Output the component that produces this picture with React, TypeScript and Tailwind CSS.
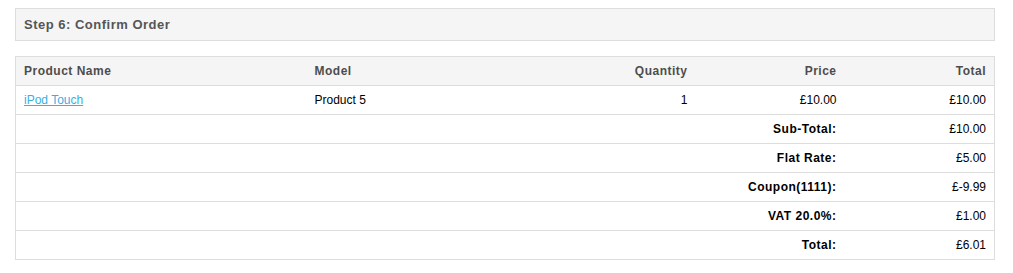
import * as React from "react"

const rows = [
  { label: "Sub-Total:", value: "£10.00" },
  { label: "Flat Rate:", value: "£5.00" },
  { label: "Coupon(1111):", value: "£-9.99" },
  { label: "VAT 20.0%:", value: "£1.00" },
  { label: "Total:", value: "£6.01" },
]

export default function App() {
  return (
    <div className="bg-white pl-[15px] pr-[18px] pt-2 text-[12px] text-black font-['Liberation_Sans',Arial,sans-serif]">
      <div className="h-[33px] border border-[#dddddd] bg-[#f5f5f5] px-2 text-[13px] leading-[31px] font-bold tracking-[0.5px] text-[#555555]">
        Step 6: Confirm Order
      </div>

      <table className="mt-[15px] w-full border-collapse border border-[#dddddd]">
        <colgroup>
          <col className="w-[291px]" />
          <col className="w-[239px]" />
          <col className="w-[150px]" />
          <col className="w-[149px]" />
          <col />
        </colgroup>
        <thead>
          <tr className="bg-[#f5f5f5] text-[#4d4d4d]">
            <td className="h-[29px] px-2 text-left font-bold tracking-[0.5px]">Product Name</td>
            <td className="px-2 text-left font-bold tracking-[0.5px]">Model</td>
            <td className="px-2 text-right font-bold tracking-[0.5px]">Quantity</td>
            <td className="px-2 text-right font-bold tracking-[0.5px]">Price</td>
            <td className="px-2 text-right font-bold tracking-[0.5px]">Total</td>
          </tr>
        </thead>
        <tbody>
          <tr className="border-t border-[#dddddd]">
            <td className="h-[29px] px-2">
              <a href="#" className="text-[#38b0e3] underline">iPod Touch</a>
            </td>
            <td className="px-2">Product 5</td>
            <td className="px-2 text-right">1</td>
            <td className="px-2 text-right">£10.00</td>
            <td className="px-2 text-right">£10.00</td>
          </tr>
          {rows.map((r) => (
            <tr key={r.label} className="border-t border-[#dddddd]">
              <td colSpan={4} className="h-[29px] px-2 text-right font-bold tracking-[0.5px]">{r.label}</td>
              <td className="px-2 text-right">{r.value}</td>
            </tr>
          ))}
        </tbody>
      </table>
    </div>
  )
}
